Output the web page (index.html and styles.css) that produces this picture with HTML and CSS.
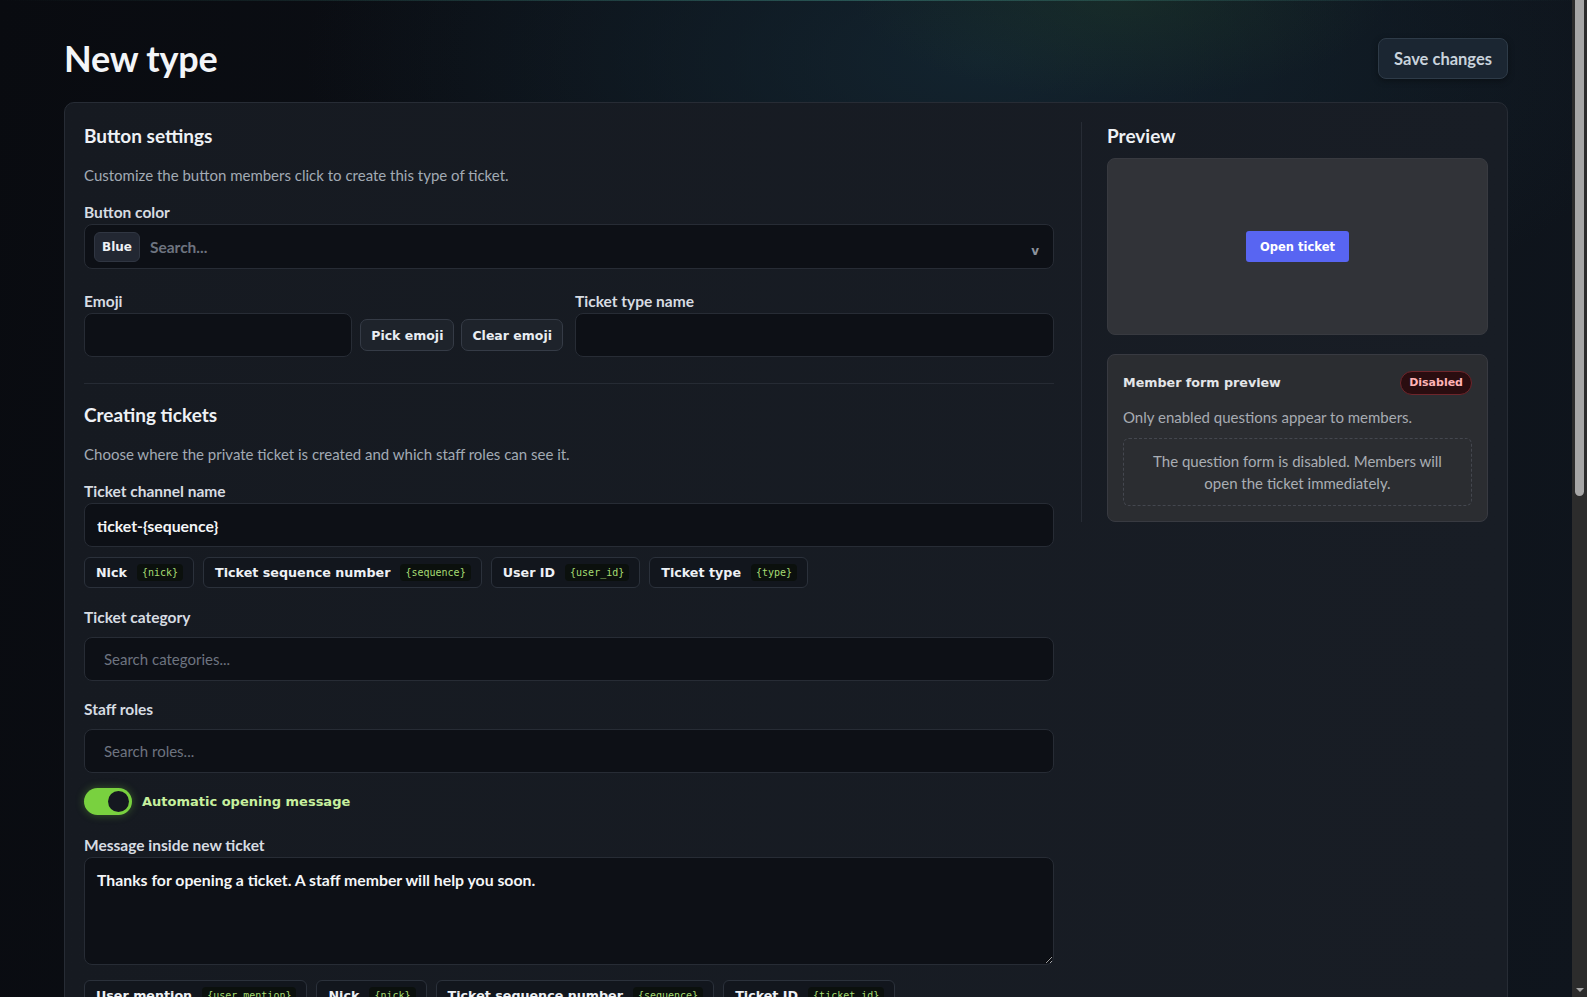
FILE: index.html
```html
<!DOCTYPE html>
<html lang="en">
<head>
    <meta charset="UTF-8">
    <meta name="viewport" content="width=device-width, initial-scale=1.0">
    <title>New type - Tickets</title>
    <link rel="stylesheet" href="styles.css">
</head>
<body>
    <div class="page">
        <header class="page-header">
            <h1 class="page-title">New type</h1>
            <button class="btn btn-save">Save changes</button>
        </header>

        <div class="editor-card">
            <div class="settings-col">
                <!-- Button settings -->
                <section class="settings-section">
                    <h2 class="section-title">Button settings</h2>
                    <p class="section-desc">Customize the button members click to create this type of ticket.</p>

                    <div class="field">
                        <label class="field-label">Button color</label>
                        <div class="select-box">
                            <span class="select-chip">Blue</span>
                            <input class="select-search" type="text" placeholder="Search...">
                            <span class="select-caret">v</span>
                        </div>
                    </div>

                    <div class="field-row">
                        <div class="field">
                            <label class="field-label">Emoji</label>
                            <div class="emoji-row">
                                <input class="text-input emoji-input" type="text">
                                <button class="btn btn-small">Pick emoji</button>
                                <button class="btn btn-small">Clear emoji</button>
                            </div>
                        </div>
                        <div class="field">
                            <label class="field-label">Ticket type name</label>
                            <input class="text-input" type="text">
                        </div>
                    </div>
                </section>

                <hr class="section-divider">

                <!-- Creating tickets -->
                <section class="settings-section">
                    <h2 class="section-title">Creating tickets</h2>
                    <p class="section-desc">Choose where the private ticket is created and which staff roles can see it.</p>

                    <div class="field field-with-chips">
                        <label class="field-label">Ticket channel name</label>
                        <input class="text-input text-strong" type="text" value="ticket-{sequence}">
                        <div class="var-chips">
                            <span class="var-chip">Nick <code>{nick}</code></span>
                            <span class="var-chip">Ticket sequence number <code>{sequence}</code></span>
                            <span class="var-chip">User ID <code>{user_id}</code></span>
                            <span class="var-chip">Ticket type <code>{type}</code></span>
                        </div>
                    </div>

                    <div class="field field-picker">
                        <label class="field-label">Ticket category</label>
                        <input class="text-input picker-input" type="text" placeholder="Search categories...">
                    </div>

                    <div class="field field-picker">
                        <label class="field-label">Staff roles</label>
                        <input class="text-input picker-input" type="text" placeholder="Search roles...">
                    </div>

                    <label class="toggle-row">
                        <span class="toggle on"><span class="knob"></span></span>
                        <span class="toggle-label">Automatic opening message</span>
                    </label>

                    <div class="field field-message">
                        <label class="field-label">Message inside new ticket</label>
                        <textarea class="text-input text-strong message-input">Thanks for opening a ticket. A staff member will help you soon.</textarea>
                        <div class="var-chips var-chips-message">
                            <span class="var-chip">User mention <code>{user_mention}</code></span>
                            <span class="var-chip">Nick <code>{nick}</code></span>
                            <span class="var-chip">Ticket sequence number <code>{sequence}</code></span>
                            <span class="var-chip">Ticket ID <code>{ticket_id}</code></span>
                        </div>
                    </div>
                </section>

                <hr class="section-divider">

                <!-- Closing tickets -->
                <section class="settings-section">
                    <h2 class="section-title">Closing tickets</h2>
                    <p class="section-desc">Decide what happens when a ticket is closed.</p>

                    <div class="field field-picker">
                        <label class="field-label">Transcript channel</label>
                        <input class="text-input picker-input" type="text" placeholder="Search channels...">
                    </div>

                    <label class="toggle-row">
                        <span class="toggle"><span class="knob"></span></span>
                        <span class="toggle-label">Ask for a reason when closing</span>
                    </label>

                    <div class="field field-message">
                        <label class="field-label">Message when ticket is closed</label>
                        <textarea class="text-input text-strong message-input">This ticket has been closed.</textarea>
                    </div>
                </section>

                <hr class="section-divider">

                <!-- Questions -->
                <section class="settings-section">
                    <h2 class="section-title">Member form</h2>
                    <p class="section-desc">Ask members a few questions before their ticket is opened.</p>

                    <label class="toggle-row">
                        <span class="toggle"><span class="knob"></span></span>
                        <span class="toggle-label">Enable question form</span>
                    </label>

                    <div class="field">
                        <label class="field-label">Form title</label>
                        <input class="text-input" type="text">
                    </div>
                    <div class="field">
                        <label class="field-label">Questions</label>
                        <div class="empty-box">No questions yet.</div>
                    </div>
                </section>
            </div>

            <aside class="preview-col">
                <h2 class="section-title">Preview</h2>
                <div class="preview-stage">
                    <span class="discord-btn">Open ticket</span>
                </div>

                <div class="form-preview">
                    <div class="form-preview-head">
                        <span class="form-preview-title">Member form preview</span>
                        <span class="badge badge-off">Disabled</span>
                    </div>
                    <p class="form-preview-desc">Only enabled questions appear to members.</p>
                    <div class="form-preview-empty">
                        The question form is disabled. Members will open the ticket immediately.
                    </div>
                </div>
            </aside>
        </div>
    </div>

    <!-- window scrollbar, drawn since the capture hides the native one -->
    <div class="scroll-rail" aria-hidden="true">
        <span class="scroll-thumb"></span>
        <span class="scroll-arrow"></span>
    </div>
</body>
</html>
```

FILE: styles.css
```css
/* Base */
html {
    color-scheme: dark;
}

body {
    margin: 0;
    padding-right: 15px; /* room for the scrollbar */
    min-height: 100vh;
    background-color: #0a0d12;
    background-image:
        linear-gradient(90deg, rgba(40, 90, 90, 0) 0%, rgba(60, 130, 120, 0.55) 55%, rgba(40, 90, 90, 0) 100%),
        radial-gradient(ellipse 380px 140px at 1120px 0px, rgba(36, 70, 40, 0.3), transparent 70%),
        radial-gradient(ellipse 900px 420px at 980px 60px, rgba(20, 40, 52, 0.8), transparent 75%),
        linear-gradient(100deg, #090b10 0%, #0d1118 55%, #0f151d 100%);
    background-size: 100% 1px, auto, auto, auto;
    background-repeat: no-repeat;
    background-attachment: fixed;
    font-family: 'Lato', 'Noto Sans', sans-serif;
    color: #e6edf3;
}

.page {
    max-width: 1444px;
    margin: 0 auto;
    padding: 38px 0 80px;
}

/* Scrollbar */
.scroll-rail {
    position: fixed;
    top: 0;
    right: 0;
    width: 15px;
    height: 100vh;
    background: #2c2c2c;
}

.scroll-thumb {
    position: absolute;
    top: 0;
    left: 3px;
    width: 9px;
    height: 496px;
    background: #a6a6a6;
    border-radius: 0 0 5px 5px;
}

.scroll-arrow {
    position: absolute;
    bottom: 5px;
    left: 4px;
    border-left: 4px solid transparent;
    border-right: 4px solid transparent;
    border-top: 4px solid #a6a6a6;
}

/* Header */
.page-header {
    display: flex;
    justify-content: space-between;
    align-items: center;
    margin-bottom: 23px;
}

.page-title {
    margin: 0;
    font-size: 36px;
    line-height: 41px;
    font-weight: 700;
    letter-spacing: -0.2px;
    color: #f3f5f8;
}

.btn {
    font-family: 'DejaVu Sans', sans-serif;
    font-weight: 700;
    cursor: pointer;
    color: #e9edf2;
}

.btn-save {
    height: 41px;
    padding: 0 15px;
    font-family: 'Lato', sans-serif;
    font-size: 16.5px;
    color: #c9d3dc;
    background: #1b2632;
    border: 1px solid #2e3b48;
    border-radius: 8px;
    box-shadow: 0 2px 6px rgba(0, 0, 0, 0.35);
}

/* Editor card */
.editor-card {
    display: grid;
    grid-template-columns: 1fr 407px;
    gap: 27px;
    align-items: start;
    padding: 20px 19px;
    background: linear-gradient(90deg, #161a21, #181d25);
    border: 1px solid #272c35;
    border-radius: 10px;
}

.section-title {
    margin: 0;
    font-size: 19px;
    line-height: 26px;
    font-weight: 700;
    color: #eef1f5;
}

.section-desc {
    margin: 16px 0 18px;
    font-size: 15px;
    line-height: 20px;
    color: #a2aab4;
}

.section-divider {
    margin: 26px 0 18px;
    border: 0;
    border-top: 1px solid #262b34;
}

.field {
    display: flex;
    flex-direction: column;
    margin-bottom: 23px;
}

.field-with-chips {
    margin-bottom: 20px;
}

.field-label {
    display: block;
    margin-bottom: 3px;
    font-size: 15.5px;
    line-height: 18px;
    font-weight: 700;
    color: #d7dce2;
}

.text-input {
    box-sizing: border-box;
    width: 100%;
    height: 44px;
    padding: 0 12px;
    font-family: 'Lato', sans-serif;
    font-size: 15px;
    color: #e6edf3;
    background: #0d1016;
    border: 1px solid #272c35;
    border-radius: 8px;
    outline: none;
}

.text-strong {
    font-size: 15.8px;
    font-weight: 700;
    color: #f4f6f8;
}

.text-input::placeholder {
    color: #6d7480;
}

/* Select */
.select-box {
    display: flex;
    align-items: center;
    gap: 8px;
    height: 45px;
    box-sizing: border-box;
    padding: 0 14px 0 9px;
    background: #0d1016;
    border: 1px solid #272c35;
    border-radius: 8px;
}

.select-chip {
    display: inline-flex;
    align-items: center;
    height: 30px;
    padding: 0 7px;
    box-sizing: border-box;
    font-family: 'DejaVu Sans', sans-serif;
    font-size: 12px;
    font-weight: 700;
    color: #eef1f5;
    background: #222732;
    border: 1px solid #303642;
    border-radius: 6px;
}

.select-search {
    flex: 1;
    background: transparent;
    border: 0;
    outline: none;
    font-family: 'Lato', sans-serif;
    font-size: 15.5px;
    font-weight: 700;
    color: #e6edf3;
}

.select-search::placeholder {
    color: #6d7480;
}

.select-caret {
    margin-top: 9px;
    font-family: 'DejaVu Sans', sans-serif;
    font-size: 12px;
    font-weight: 700;
    color: #8c939d;
}

.field-row {
    display: grid;
    grid-template-columns: 1fr 1fr;
    gap: 12px;
}

.field-row .field {
    margin-bottom: 0;
}

.emoji-row {
    display: flex;
    align-items: center;
    gap: 7px;
}

.emoji-input {
    flex: 1;
    margin-right: 1px;
}

.btn-small {
    height: 32px;
    padding: 0 10px;
    font-size: 12.5px;
    background: #1e232b;
    border: 1px solid #353b46;
    border-radius: 7px;
}

/* Variable chips */
.var-chips {
    display: flex;
    flex-wrap: wrap;
    gap: 9px;
    margin-top: 10px;
}

.var-chip {
    display: inline-flex;
    align-items: center;
    gap: 10px;
    height: 31px;
    box-sizing: border-box;
    padding: 0 10px 0 11px;
    font-family: 'DejaVu Sans', sans-serif;
    font-size: 12.7px;
    font-weight: 700;
    color: #eef1f5;
    background: #12161d;
    border: 1px solid #2b313b;
    border-radius: 6px;
}

.var-chip code {
    padding: 3px 5px;
    font-family: 'DejaVu Sans Mono', monospace;
    font-size: 10px;
    font-weight: 400;
    color: #a6dc73;
    background: #0b100d;
    border-radius: 4px;
}

.var-chips-message {
    margin-top: 15px;
}

.field-picker .picker-input {
    margin-top: 8px;
    padding-left: 19px;
}

.field-picker {
    margin-bottom: 19px;
}

/* Toggle */
.toggle-row {
    display: flex;
    align-items: center;
    gap: 10px;
    margin: -4px 0 21px;
    cursor: pointer;
}

.toggle {
    position: relative;
    width: 48px;
    height: 27px;
    border-radius: 14px;
    background: #353a44;
}

.toggle .knob {
    position: absolute;
    top: 3px;
    left: 3px;
    width: 21px;
    height: 21px;
    border-radius: 50%;
    background: #c9ced6;
}

.toggle.on {
    background: #79d13f;
    box-shadow: 0 0 8px rgba(121, 209, 63, 0.35);
}

.toggle.on .knob {
    left: 24px;
    background: #151820;
}

.toggle-label {
    font-family: 'DejaVu Sans', sans-serif;
    font-size: 13px;
    font-weight: 700;
    color: #d8d8dc;
}

.toggle.on + .toggle-label {
    color: #c7f09e;
}

.message-input {
    height: 108px;
    padding: 12px;
    line-height: 20px;
    resize: vertical;
}

.empty-box {
    padding: 18px;
    font-size: 14px;
    color: #8c939d;
    border: 1px dashed #343a45;
    border-radius: 8px;
}

/* Preview column */
.preview-col {
    padding-left: 25px;
    border-left: 1px solid #272c35;
    margin-top: -1px;
    padding-top: 1px;
}

.preview-stage {
    display: flex;
    justify-content: center;
    align-items: center;
    height: 177px;
    margin-top: 9px;
    background: #313338;
    border: 1px solid #383a40;
    border-radius: 8px;
    box-sizing: border-box;
}

.discord-btn {
    display: inline-flex;
    align-items: center;
    justify-content: center;
    width: 103px;
    height: 31px;
    font-family: 'DejaVu Sans', sans-serif;
    font-size: 11.5px;
    font-weight: 700;
    color: #ffffff;
    background: #5865f2;
    border-radius: 3px;
}

.form-preview {
    margin-top: 19px;
    padding: 15px 15px;
    background: #2b2d31;
    border: 1px solid #383a41;
    border-radius: 8px;
}

.form-preview-head {
    display: flex;
    justify-content: space-between;
    align-items: center;
    height: 25px;
}

.form-preview-title {
    font-family: 'DejaVu Sans', sans-serif;
    font-size: 12.7px;
    font-weight: 700;
    color: #e3e5e8;
}

.badge {
    display: inline-flex;
    align-items: center;
    height: 24px;
    padding: 0 8px;
    box-sizing: border-box;
    font-family: 'DejaVu Sans', sans-serif;
    font-size: 11px;
    font-weight: 700;
    border-radius: 12px;
}

.badge-off {
    color: #ffb3b6;
    background: #2a0d10;
    border: 1px solid #6e252b;
}

.form-preview-desc {
    margin: 12px 0 11px;
    font-size: 15px;
    line-height: 20px;
    color: #a7abb2;
}

.form-preview-empty {
    padding: 11px 20px;
    font-size: 15px;
    line-height: 22px;
    text-align: center;
    color: #a9adb4;
    border: 1px dashed #44474f;
    border-radius: 6px;
}
```
